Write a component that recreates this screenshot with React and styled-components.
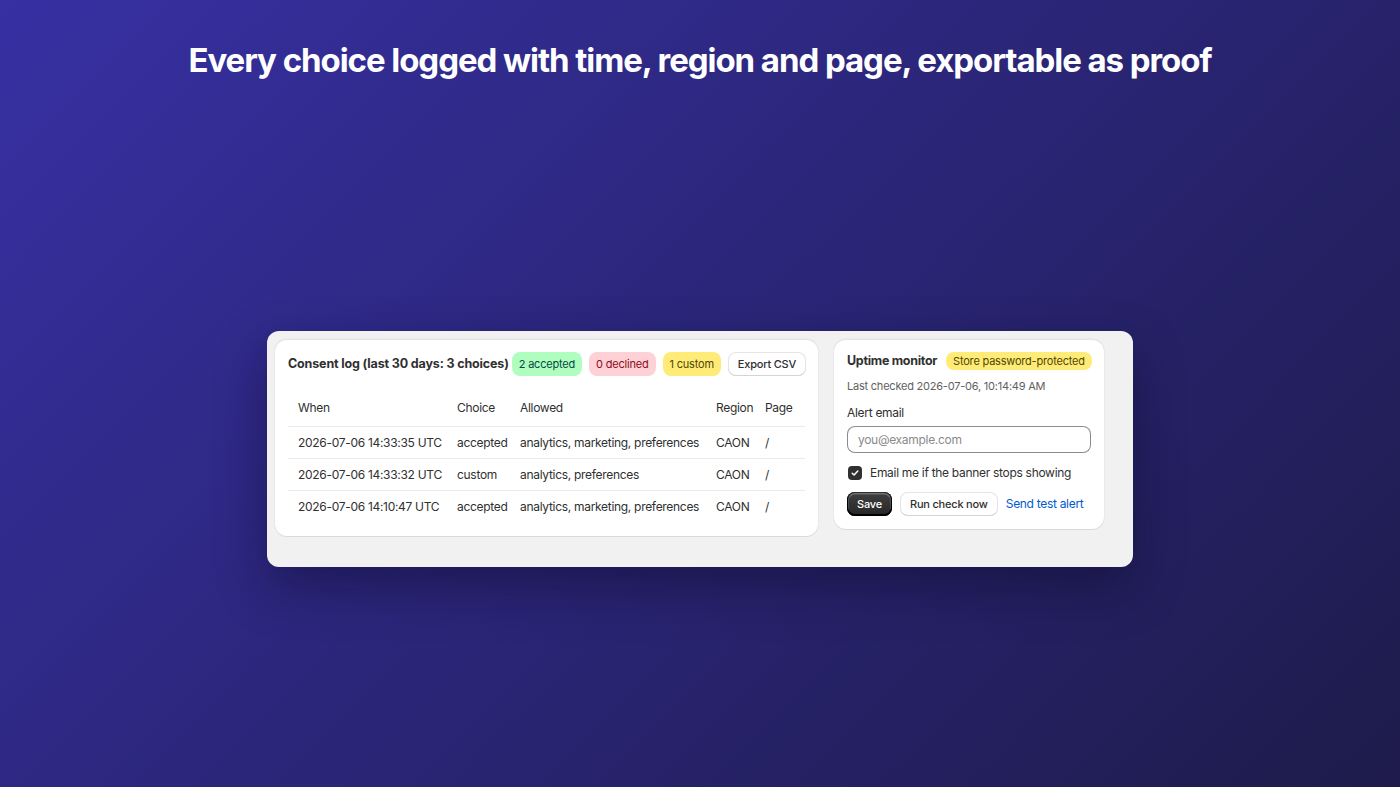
import styled, { createGlobalStyle } from "styled-components";

const GlobalStyle = createGlobalStyle`
  html, body {
    margin: 0;
    padding: 0;
  }
  body {
    font-family: Inter, "Noto Sans", sans-serif;
    color: #303030;
  }
  * {
    box-sizing: border-box;
  }
`;

const Page = styled.div`
  width: 100vw;
  height: 787px;
  display: flex;
  flex-direction: column;
  background: linear-gradient(135deg, #3730a3 0%, #1e1b4b 100%);
  overflow: hidden;
`;

const Heading = styled.h1`
  margin: 0;
  padding: 39px 0 29px;
  text-align: center;
  color: #ffffff;
  font-size: 33px;
  font-weight: 700;
  letter-spacing: -0.032em;
  line-height: 42px;
`;

const Stage = styled.div`
  flex: 1;
  display: flex;
  align-items: center;
  justify-content: center;
`;

const Panel = styled.div`
  width: 866px;
  display: flex;
  align-items: flex-start;
  gap: 16px;
  padding: 8px 8px 31px;
  background: #f1f1f1;
  border-radius: 12px;
  box-shadow: 0 20px 50px rgba(10, 8, 40, 0.45);
`;

const Card = styled.div`
  width: ${(p) => p.$width}px;
  flex-shrink: 0;
  background: #ffffff;
  border-radius: 12px;
  padding: 13px;
  box-shadow: 0 1px 0 rgba(26, 26, 26, 0.07), 0 1px 0 rgba(204, 204, 204, 0.5) inset,
    0 0 0 1px rgba(0, 0, 0, 0.03);
`;

const HeaderRow = styled.div`
  display: flex;
  align-items: center;
  gap: 7px;
`;

const CardTitle = styled.div`
  font-size: 12.5px;
  font-weight: 650;
  letter-spacing: ${(p) => (p.$wide ? -0.15 : -0.3)}px;
  color: #303030;
  white-space: nowrap;
  margin-right: ${(p) => p.$gap || 0}px;
`;

const tones = {
  success: { bg: "#affebf", fg: "#014b40" },
  critical: { bg: "#fed1d7", fg: "#8e0b21" },
  warning: { bg: "#ffeb78", fg: "#4f4700" },
};

const Badge = styled.span`
  display: inline-flex;
  align-items: center;
  height: ${(p) => (p.$small ? 18 : 24)}px;
  padding: 0 7px;
  border-radius: 8px;
  font-size: 11px;
  letter-spacing: -0.2px;
  background: ${(p) => tones[p.$tone].bg};
  color: ${(p) => tones[p.$tone].fg};
  white-space: nowrap;
`;

const Button = styled.button`
  height: 24px;
  padding: 0 10px;
  border-radius: 8px;
  font-family: inherit;
  font-size: 11px;
  letter-spacing: -0.2px;
  font-weight: 550;
  cursor: pointer;
  white-space: nowrap;
  border: none;
  background: ${(p) => (p.$primary ? "linear-gradient(#404040, #262626)" : "#ffffff")};
  color: ${(p) => (p.$primary ? "#ffffff" : "#303030")};
  box-shadow: ${(p) =>
    p.$primary
      ? "0 -1px 0 1px #000 inset, 0 0 0 1px #303030 inset, 0 1px 0 1.5px rgba(255,255,255,0.25) inset"
      : "0 -1px 0 0 #d4d4d4 inset, 0 0 0 1px rgba(0,0,0,0.1) inset, 0 0.5px 0 1.5px #fff inset"};
`;

const Table = styled.table`
  width: 100%;
  margin-top: 13px;
  border-collapse: collapse;
  table-layout: fixed;
  font-size: 12px;
  letter-spacing: -0.3px;
  color: #303030;
`;

const Th = styled.th`
  text-align: left;
  font-weight: 400;
  height: 38px;
  padding: 0 0 0 ${(p) => (p.$first ? 10 : 7)}px;
  white-space: nowrap;
  border-bottom: 1px solid #ebebeb;
`;

const Td = styled.td`
  height: 32px;
  padding: 0 0 0 ${(p) => (p.$first ? 10 : 7)}px;
  white-space: nowrap;
  border-bottom: ${(p) => (p.$last ? "none" : "1px solid #ebebeb")};
`;

const Stack = styled.div`
  display: flex;
  flex-direction: column;
`;

const Muted = styled.div`
  margin-top: 8px;
  font-size: 11px;
  letter-spacing: -0.22px;
  line-height: 16px;
  color: #616161;
`;

const Label = styled.label`
  margin-top: 11px;
  font-size: 12px;
  letter-spacing: -0.3px;
  line-height: 16px;
  color: #303030;
`;

const Input = styled.input`
  margin-top: 5px;
  height: 27px;
  width: 100%;
  padding: 0 10px;
  border: 1px solid #8a8a8a;
  border-top-color: #898f94;
  border-radius: 8px;
  font-family: inherit;
  font-size: 12px;
  letter-spacing: -0.3px;
  color: #303030;
  &::placeholder {
    color: #8a8a8a;
  }
`;

const CheckRow = styled.label`
  margin-top: 12px;
  display: flex;
  align-items: center;
  gap: 8px;
  font-size: 12px;
  letter-spacing: -0.3px;
  line-height: 16px;
  white-space: nowrap;
`;

const Box = styled.span`
  width: 14px;
  height: 14px;
  margin-left: 1px;
  border-radius: 4px;
  background: #303030;
  display: inline-flex;
  align-items: center;
  justify-content: center;
`;

const Actions = styled.div`
  margin-top: 11px;
  display: flex;
  align-items: center;
  gap: 8px;
`;

const Link = styled.a`
  font-size: 12px;
  letter-spacing: -0.3px;
  color: #005bd3;
  text-decoration: none;
  white-space: nowrap;
  cursor: pointer;
`;

const columns = [
  { label: "When", width: 162 },
  { label: "Choice", width: 63 },
  { label: "Allowed", width: 196 },
  { label: "Region", width: 49 },
  { label: "Page" },
];

const rows = [
  ["2026-07-06 14:33:35 UTC", "accepted", "analytics, marketing, preferences", "CAON", "/"],
  ["2026-07-06 14:33:32 UTC", "custom", "analytics, preferences", "CAON", "/"],
  ["2026-07-06 14:10:47 UTC", "accepted", "analytics, marketing, preferences", "CAON", "/"],
];

export default function App() {
  return (
    <>
      <GlobalStyle />
      <Page>
        <Heading>Every choice logged with time, region and page, exportable as proof</Heading>
        <Stage>
          <Panel>
            <Card $width={543}>
              <HeaderRow>
                <CardTitle $wide $gap={-4}>
                  Consent log (last 30 days: 3 choices)
                </CardTitle>
                <Badge $tone="success">2 accepted</Badge>
                <Badge $tone="critical">0 declined</Badge>
                <Badge $tone="warning">1 custom</Badge>
                <Button>Export CSV</Button>
              </HeaderRow>
              <Table>
                <colgroup>
                  {columns.map((c) => (
                    <col key={c.label} style={c.width ? { width: c.width } : undefined} />
                  ))}
                </colgroup>
                <thead>
                  <tr>
                    {columns.map((c, j) => (
                      <Th key={c.label} $first={j === 0}>
                        {c.label}
                      </Th>
                    ))}
                  </tr>
                </thead>
                <tbody>
                  {rows.map((r, i) => (
                    <tr key={i}>
                      {r.map((c, j) => (
                        <Td key={j} $first={j === 0} $last={i === rows.length - 1}>
                          {c}
                        </Td>
                      ))}
                    </tr>
                  ))}
                </tbody>
              </Table>
            </Card>
            <Card $width={270}>
              <Stack>
                <HeaderRow>
                  <CardTitle $gap={2}>Uptime monitor</CardTitle>
                  <Badge $tone="warning" $small>
                    Store password-protected
                  </Badge>
                </HeaderRow>
                <Muted>Last checked 2026-07-06, 10:14:49 AM</Muted>
                <Label htmlFor="alert-email">Alert email</Label>
                <Input id="alert-email" placeholder="you@example.com" />
                <CheckRow>
                  <Box>
                    <svg width="10" height="10" viewBox="0 0 10 10" fill="none">
                      <path
                        d="M2.2 5.2 L4.1 7 L7.8 3"
                        stroke="#fff"
                        strokeWidth="1.5"
                        strokeLinecap="round"
                        strokeLinejoin="round"
                      />
                    </svg>
                  </Box>
                  Email me if the banner stops showing
                </CheckRow>
                <Actions>
                  <Button $primary>Save</Button>
                  <Button>Run check now</Button>
                  <Link>Send test alert</Link>
                </Actions>
              </Stack>
            </Card>
          </Panel>
        </Stage>
      </Page>
    </>
  );
}
